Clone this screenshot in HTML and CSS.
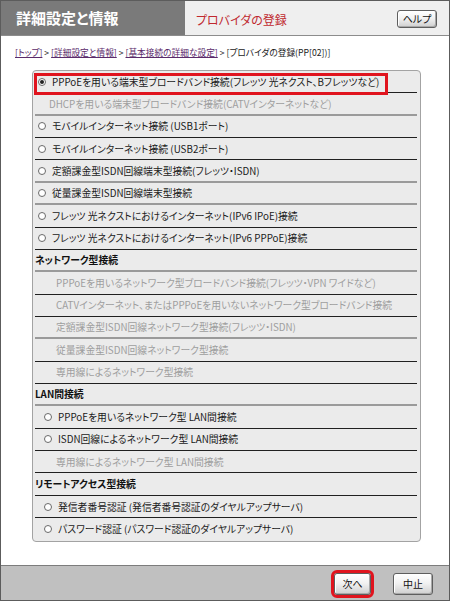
FILE: index.html
```html
<!DOCTYPE html>
<html lang="ja">
<head>
<meta charset="utf-8">
<title>プロバイダの登録</title>
<link rel="stylesheet" href="styles.css">
</head>
<body>
<div class="window">
  <header class="topbar">
    <div class="title">詳細設定と情報</div>
    <div class="subbar">
      <span class="subtitle">プロバイダの登録</span>
      <button class="btn help">ヘルプ</button>
    </div>
  </header>
  <main class="content">
    <nav class="crumbs"><a href="#">[トップ]</a> &gt; <a href="#">[詳細設定と情報]</a> &gt; <a href="#">[基本接続の詳細な設定]</a> &gt; [プロバイダの登録(PP[02])]</nav>
    <div class="panel">
      <div class="row first"><span class="mark"></span><span class="radio on"></span><span>PPPoEを用いる端末型ブロードバンド接続(フレッツ 光ネクスト、Bフレッツなど)</span></div>
      <div class="row soft off ind1">DHCPを用いる端末型ブロードバンド接続(CATVインターネットなど)</div>
      <div class="row"><span class="radio"></span><span>モバイルインターネット接続 (USB1ポート)</span></div>
      <div class="row"><span class="radio"></span><span>モバイルインターネット接続 (USB2ポート)</span></div>
      <div class="row soft"><span class="radio"></span><span>定額課金型ISDN回線端末型接続(フレッツ・ISDN)</span></div>
      <div class="row soft"><span class="radio"></span><span>従量課金型ISDN回線端末型接続</span></div>
      <div class="row"><span class="radio"></span><span>フレッツ 光ネクストにおけるインターネット(IPv6 IPoE)接続</span></div>
      <div class="row"><span class="radio"></span><span>フレッツ 光ネクストにおけるインターネット(IPv6 PPPoE)接続</span></div>
      <div class="row soft head">ネットワーク型接続</div>
      <div class="row off ind2">PPPoEを用いるネットワーク型ブロードバンド接続(フレッツ・VPN ワイドなど)</div>
      <div class="row off ind2">CATVインターネット、またはPPPoEを用いないネットワーク型ブロードバンド接続</div>
      <div class="row soft off ind2">定額課金型ISDN回線ネットワーク型接続(フレッツ・ISDN)</div>
      <div class="row off ind2">従量課金型ISDN回線ネットワーク型接続</div>
      <div class="row off ind2">専用線によるネットワーク型接続</div>
      <div class="row soft head">LAN間接続</div>
      <div class="row sub"><span class="radio"></span><span>PPPoEを用いるネットワーク型 LAN間接続</span></div>
      <div class="row sub"><span class="radio"></span><span>ISDN回線によるネットワーク型 LAN間接続</span></div>
      <div class="row off ind2">専用線によるネットワーク型 LAN間接続</div>
      <div class="row head">リモートアクセス型接続</div>
      <div class="row sub"><span class="radio"></span><span>発信者番号認証 (発信者番号認証のダイヤルアップサーバ)</span></div>
      <div class="row sub last"><span class="radio"></span><span>パスワード認証 (パスワード認証のダイヤルアップサーバ)</span></div>
    </div>
  </main>
  <footer class="footer">
    <button class="btn next">次へ</button>
    <button class="btn cancel">中止</button>
  </footer>
</div>
</body>
</html>
```

FILE: styles.css
```css
* { box-sizing: border-box; }
html, body { margin: 0; padding: 0; background: #fff; }
body {
  font-family: "Noto Sans CJK JP", "Noto Sans", sans-serif;
  font-feature-settings: "palt";
  color: #1a1a1a;
}
.window {
  width: 450px;
  height: 601px;
  border: 1px solid #5c5c5c;
  display: flex;
  flex-direction: column;
  overflow: hidden;
}
.topbar {
  display: flex;
  height: 35px;
  flex: none;
  border-bottom: 1px solid #8c8c8c;
}
.title {
  width: 184px;
  background: #7a7a7a;
  color: #fff;
  font-weight: bold;
  font-size: 15px;
  line-height: 34px;
  padding-left: 15px;
}
.subbar {
  flex: 1;
  background: #efefef;
  display: flex;
  align-items: center;
  justify-content: space-between;
  padding: 2px 12px 0 11px;
}
.subtitle {
  color: #c0292f;
  font-size: 12px;
}
.btn {
  font-family: inherit;
  font-feature-settings: "palt";
  font-size: 10px;
  color: #111;
  border: 1px solid #5e5e5e;
  border-radius: 3px;
  background: linear-gradient(#ffffff 0%, #f2f2f2 45%, #cfcfcf 100%);
  box-shadow: inset -1px -1px 0 #a8a8a8, inset 1px 1px 0 #fff;
  padding: 0;
  line-height: 1;
  cursor: pointer;
}
.help {
  width: 40px;
  height: 18px;
}
.content {
  flex: 1;
  background: #fff;
}
.crumbs {
  font-size: 8.7px;
  line-height: 12px;
  padding: 11px 0 0 14px;
  color: #222;
  white-space: nowrap;
}
.crumbs a {
  color: #5a2a6a;
  text-decoration: underline;
}
.panel {
  margin: 11px 0 0 31px;
  width: 389px;
  border: 1px solid #a3a3a3;
  border-radius: 4px;
  background: #ebebeb;
  padding: 0 3px 0 2px;
}
.row {
  position: relative;
  height: 22.37px;
  display: flex;
  align-items: center;
  font-size: 9.8px;
  white-space: nowrap;
  border-bottom: 1px solid #202020;
  padding-left: 3px;
  gap: 6px;
}
.row.soft { border-bottom: 2px solid #9a9a9a; }
.row.last { border-bottom: none; }
.row.sub { padding-left: 9px; }
.row.off { color: #9e9e9e; }
.row.ind1 { padding-left: 14px; }
.row.ind2 { padding-left: 21px; }
.row.head { padding-left: 0; font-weight: bold; color: #111; }
.radio {
  width: 8px;
  height: 8px;
  border: 1px solid #6a6a6a;
  border-radius: 50%;
  background: #fff;
  flex: none;
  display: flex;
  align-items: center;
  justify-content: center;
}
.radio.on::after {
  content: "";
  width: 4px;
  height: 4px;
  border-radius: 50%;
  background: #222;
}
.mark {
  position: absolute;
  left: -1px;
  top: 2px;
  width: 354px;
  height: 22px;
  border: 3px solid #e0141e;
  z-index: 2;
}
.footer {
  flex: none;
  height: 35px;
  background: #c0c0c0;
  border-top: 1px solid #7c7c7c;
  display: flex;
  justify-content: flex-end;
  align-items: flex-start;
  padding: 7px 16px 0 0;
  gap: 22px;
}
.next {
  width: 37px;
  height: 22px;
  outline: 3px solid #e0141e;
}
.cancel {
  width: 40px;
  height: 22px;
}
```
